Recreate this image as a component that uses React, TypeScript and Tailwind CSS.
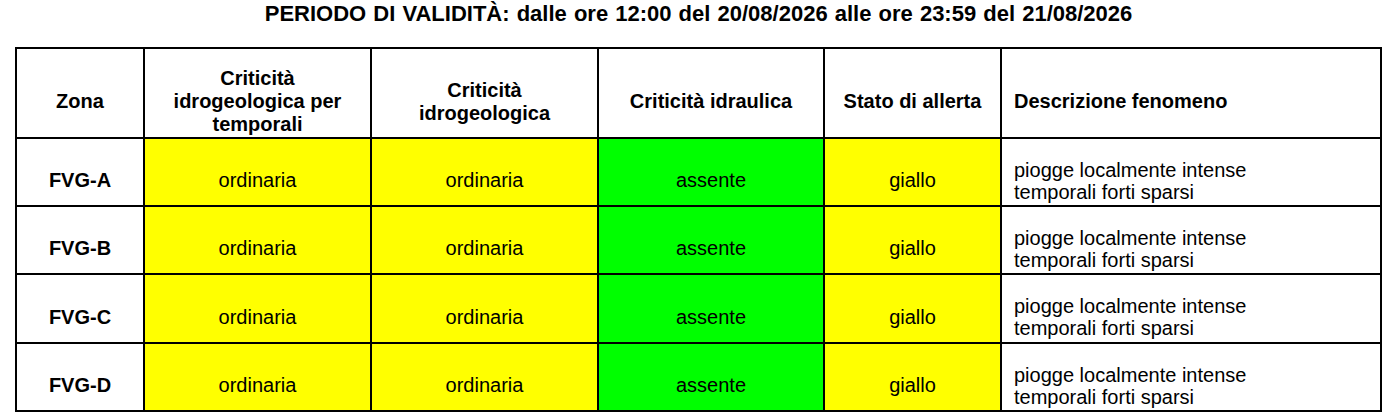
import React from "react";

const rows = ["FVG-A", "FVG-B", "FVG-C", "FVG-D"];

export default function App() {
  const cell = "flex items-center justify-center text-center pt-[17px] px-[14px]";
  return (
    <div
      className="w-[1390px] h-[412px] bg-white text-black pl-[15px] pr-[8px] overflow-hidden"
      style={{ fontFamily: '"Liberation Sans", Arial, sans-serif' }}
    >
      <h1 className="text-[22px] leading-[25px] font-bold text-center pt-[1px] h-[47px] [word-spacing:1px]">
        PERIODO DI VALIDITÀ: dalle ore 12:00 del 20/08/2026 alle ore 23:59 del 21/08/2026
      </h1>
      <div className="grid grid-cols-[126px_225px_225px_224px_175px_1fr] grid-rows-[88px_66px_66px_67px_66px] gap-[2px] p-[2px] bg-black text-[20px] leading-[23px]">
        <div className={`${cell} bg-white font-bold`}>Zona</div>
        <div className={`${cell} bg-white font-bold`}>Criticità idrogeologica per temporali</div>
        <div className={`${cell} bg-white font-bold`}>Criticità idrogeologica</div>
        <div className={`${cell} bg-white font-bold`}>Criticità idraulica</div>
        <div className={`${cell} bg-white font-bold`}>Stato di allerta</div>
        <div className="bg-white flex items-center pt-[17px] pl-[12px] font-bold">Descrizione fenomeno</div>
        {rows.map((z) => (
          <React.Fragment key={z}>
            <div className={`${cell} bg-white font-bold`}>{z}</div>
            <div className={`${cell} bg-[#ffff00]`}>ordinaria</div>
            <div className={`${cell} bg-[#ffff00]`}>ordinaria</div>
            <div className={`${cell} bg-[#00ff00]`}>assente</div>
            <div className={`${cell} bg-[#ffff00]`}>giallo</div>
            <div className="bg-white flex items-center pt-[17px] pl-[12px] leading-[22px]">
              <div>
                piogge localmente intense
                <br />
                temporali forti sparsi
              </div>
            </div>
          </React.Fragment>
        ))}
      </div>
    </div>
  );
}
